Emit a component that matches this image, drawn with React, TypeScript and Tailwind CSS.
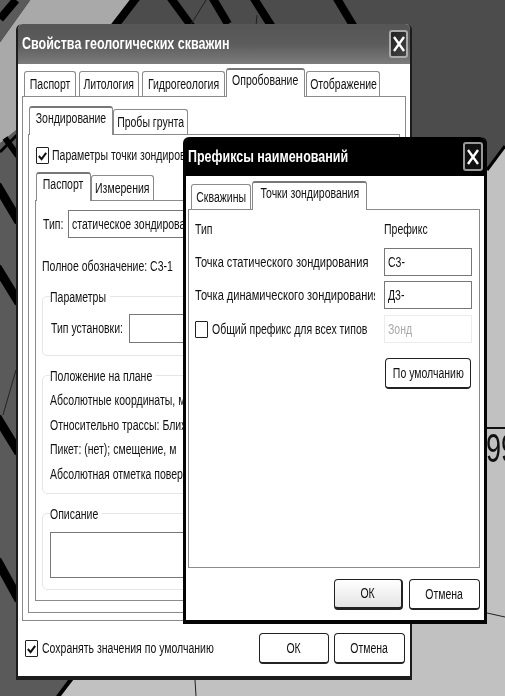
import type { ReactNode } from 'react';

// шрифт в окнах узкий, такого нет, поэтому сжимаем по горизонтали
function T({ children, center, wide }: { children: ReactNode; center?: boolean; wide?: boolean }) {
  return (
    <span
      className={
        'inline-block shrink-0 whitespace-nowrap ' +
        (wide ? 'scale-x-[0.79] ' : 'scale-x-[0.75] ') +
        (center ? 'origin-center' : 'origin-left')
      }
    >
      {children}
    </span>
  );
}

function Tab({ label, active, w }: { label: string; active?: boolean; w: number }) {
  return (
    <div
      style={{ width: w }}
      className={
        active
          ? 'relative z-10 -mb-px flex h-[29px] shrink-0 items-center justify-center rounded-t-[3px] border-x border-t-2 border-[#8a8a8a] border-t-[#777] bg-white pb-[6px] text-[#111]'
          : 'flex h-[25px] shrink-0 items-center justify-center rounded-t-[3px] border-x border-t border-[#8a8a8a] bg-white pt-[1px] text-[#111]'
      }
    >
      <T center>{label}</T>
    </div>
  );
}

function CheckBox({ checked }: { checked?: boolean }) {
  return (
    <div className="flex h-[17px] w-[13px] shrink-0 items-center justify-center rounded-[1px] border border-[#222] bg-white">
      {checked && (
        <svg viewBox="0 0 12 12" className="h-[12px] w-[11px]">
          <path d="M2 6 L5 9.5 L10 2.5" fill="none" stroke="#111" strokeWidth="2.2" />
        </svg>
      )}
    </div>
  );
}

function CloseButton({ dark }: { dark?: boolean }) {
  return (
    <div
      className={
        dark
          ? 'flex h-[29px] w-[20px] items-center justify-center rounded-[3px] border-2 border-[#999] bg-[#111]'
          : 'flex h-[28px] w-[19px] items-center justify-center rounded-[3px] border-2 border-[#aaa] bg-gradient-to-br from-[#222] to-[#444]'
      }
    >
      <svg viewBox="0 0 14 18" className="h-[18px] w-[14px]">
        <path d="M2 2 L12 16 M12 2 L2 16" stroke="#fff" strokeWidth="2.4" fill="none" />
      </svg>
    </div>
  );
}

function Btn({ label, w, main }: { label: string; w: number; main?: boolean }) {
  return (
    <div
      style={{ width: w }}
      className={
        'flex h-[31px] shrink-0 items-center justify-center rounded-[4px] border border-[#222] text-[#111] ' +
        (main ? 'border-r-2 border-b-[3px] bg-gradient-to-b from-white to-[#e4e4e4]' : 'border-b-2 bg-white')
      }
    >
      <T center>{label}</T>
    </div>
  );
}

function Group({ title, h, children }: { title: string; h: number; children: ReactNode }) {
  return (
    <div style={{ height: h }} className="relative -ml-px w-[400px] shrink-0 rounded-[5px] border border-[#e6e6e6]">
      <span className="absolute top-[-10px] left-[7px] origin-left scale-x-[0.75] whitespace-nowrap bg-white pr-[5px]">
        {title}
      </span>
      {children}
    </div>
  );
}

function Field({ text, className }: { text?: string; className: string }) {
  return (
    <div className={'flex shrink-0 items-center overflow-hidden border border-[#777] bg-white pl-[3px] ' + className}>
      {text && <T>{text}</T>}
    </div>
  );
}

function MainWindow() {
  return (
    <div className="absolute top-[24px] left-[16px] flex h-[656px] w-[396px] flex-col rounded-t-[6px] border-x-2 border-b-4 border-[#1c1c1c] bg-white text-[14px] text-[#111]">
      <div className="flex h-[40px] shrink-0 items-center justify-between rounded-t-[5px] bg-gradient-to-b from-[#555] via-[#5c5c5c] to-[#7c7c7c] pr-[2px] pl-[4px]">
        <span className="inline-block origin-left scale-x-[0.78] whitespace-nowrap text-[16px] font-bold text-white">
          Свойства геологических скважин
        </span>
        <CloseButton />
      </div>
      <div className="flex h-[32px] shrink-0 items-end gap-[1px] pl-[6px]">
        <Tab label="Паспорт" w={52} />
        <div className="w-px" />
        <Tab label="Литология" w={60} />
        <div className="w-px" />
        <Tab label="Гидрогеология" w={83} />
        <Tab label="Опробование" w={79} active />
        <Tab label="Отображение" w={74} />
      </div>
      <div className="mx-[4px] flex h-[525px] flex-col overflow-hidden border border-[#8a8a8a] pr-[5px] pb-[7px] pl-[5px]">
        <div className="flex h-[37px] shrink-0 items-end pl-[1px]">
          <Tab label="Зондирование" w={84} active />
          <Tab label="Пробы грунта" w={75} />
        </div>
        <div className="flex min-h-0 flex-1 flex-col border border-[#8a8a8a] pr-[6px] pb-[11px] pl-[6px]">
          <div className="mt-[12px] flex h-[17px] shrink-0 items-center gap-[3px] pl-[1px]">
            <CheckBox checked />
            <T>Параметры точки зондирования</T>
          </div>
          <div className="mt-[8px] flex h-[28px] shrink-0 items-end pl-[1px]">
            <Tab label="Паспорт" w={55} active />
            <Tab label="Измерения" w={63} />
          </div>
          <div className="flex min-h-0 flex-1 flex-col overflow-hidden border border-[#8a8a8a] px-[7px]">
            <div className="mt-[9px] flex h-[28px] shrink-0 items-center">
              <div className="w-[25px] shrink-0">
                <T>Тип:</T>
              </div>
              <Field text="статическое зондирование" className="h-[28px] flex-1" />
            </div>
            <div className="mt-[19px] -ml-px h-[18px] shrink-0 leading-[18px]">
              <T>Полное обозначение: С3-1</T>
            </div>
            <div className="mt-[21px]">
              <Group title="Параметры" h={60}>
                <div className="mt-[17px] flex items-center pl-[8px]">
                  <div className="w-[78px] shrink-0">
                    <T>Тип установки:</T>
                  </div>
                  <Field className="h-[29px] flex-1" />
                </div>
              </Group>
            </div>
            <div className="mt-[19px]">
              <Group title="Положение на плане" h={119}>
                <div className="pt-[12px] pl-[7px] leading-[24.7px]">
                  <div>
                    <T>Абсолютные координаты, м</T>
                  </div>
                  <div>
                    <T>Относительно трассы: Ближайшая</T>
                  </div>
                  <div>
                    <T>Пикет: (нет); смещение, м</T>
                  </div>
                  <div>
                    <T>Абсолютная отметка поверхности</T>
                  </div>
                </div>
              </Group>
            </div>
            <div className="mt-[19px]">
              <Group title="Описание" h={77}>
                <Field className="mt-[18px] ml-[7px] h-[46px] w-[380px]" />
              </Group>
            </div>
          </div>
        </div>
      </div>
      <div className="flex flex-1 items-center justify-between pr-[5px] pl-[7px]">
        <div className="flex w-[200px] shrink-0 items-center gap-[4px]">
          <CheckBox checked />
          <T>Сохранять значения по умолчанию</T>
        </div>
        <div className="flex gap-[5px]">
          <Btn label="ОК" w={70} />
          <Btn label="Отмена" w={71} />
        </div>
      </div>
    </div>
  );
}

function PrefixDialog() {
  return (
    <div className="absolute top-[137px] left-[183px] flex h-[487px] w-[304px] flex-col rounded-t-[6px] border-x-[3px] border-b-4 border-[#050505] bg-white text-[14px] text-[#111]">
      <div className="flex h-[39px] shrink-0 items-center justify-between rounded-t-[4px] bg-black pr-[1px] pl-[2px]">
        <span className="inline-block origin-left scale-x-[0.78] whitespace-nowrap text-[16px] font-bold text-white">
          Префиксы наименований
        </span>
        <CloseButton dark />
      </div>
      <div className="flex h-[33px] shrink-0 items-end gap-[1px] pl-[5px]">
        <Tab label="Скважины" w={60} />
        <Tab label="Точки зондирования" w={115} active />
      </div>
      <div className="mr-[4px] ml-[2px] h-[359px] shrink-0 border border-[#8a8a8a] pl-[6px]">
        <div className="mt-[10px] flex h-[18px] items-center">
          <div className="w-[189px]">
            <T>Тип</T>
          </div>
          <T>Префикс</T>
        </div>
        <div className="mt-[10px] flex items-center">
          <div className="w-[189px] shrink-0">
            <T wide>Точка статического зондирования</T>
          </div>
          <Field text="С3-" className="h-[28px] w-[88px]" />
        </div>
        <div className="mt-[5px] flex items-center">
          <div className="w-[180px] shrink-0 overflow-hidden">
            <T wide>Точка динамического зондирования</T>
          </div>
          <Field text="Д3-" className="ml-[9px] h-[28px] w-[88px]" />
        </div>
        <div className="mt-[6px] flex items-center">
          <div className="flex w-[189px] shrink-0 items-center gap-[4px]">
            <CheckBox />
            <T>Общий префикс для всех типов</T>
          </div>
          <div className="flex h-[28px] w-[88px] items-center border border-[#ececec] pl-[3px] text-[#aaa]">
            <T>Зонд</T>
          </div>
        </div>
        <div className="mt-[15px] ml-[190px]">
          <Btn label="По умолчанию" w={86} />
        </div>
      </div>
      <div className="mt-[11px] mr-[4px] flex justify-end gap-[6px]">
        <Btn label="ОК" w={69} main />
        <Btn label="Отмена" w={71} />
      </div>
    </div>
  );
}

export default function App() {
  return (
    <div className="relative h-[696px] w-[505px] overflow-hidden bg-[#c1c1c1] font-['Liberation_Sans',sans-serif] blur-[0.3px]">
      {/* карта под окнами */}
      <svg viewBox="0 0 505 696" className="absolute inset-0 h-full w-full">
        <polygon points="0,0 505,0 505,145 487,168 412,168 412,696 60,696 0,696" fill="#5a5a5a" />
        <polygon points="130,0 505,0 505,145 487,168 412,168 412,30 110,30" fill="#4c4c4c" />
        <polygon points="30,0 130,0 110,30 16,30 16,130 0,143 0,42" fill="#a9a9a9" />
        <polygon points="60,696 75,678 412,678 412,696" fill="#c1c1c1" />
        <g stroke="#000" strokeWidth="8" fill="none">
          <path d="M0 19 L16 0" />
          <path d="M114 27 L137 -3" />
          <path d="M170 -3 L192 27" />
          <path d="M212 -3 L228 24" />
          <path d="M253 -3 L272 27" />
          <path d="M336 -3 L354 27" />
          <path d="M-3 185 L19 222" strokeWidth="9" />
          <path d="M-3 267 L19 303" strokeWidth="9" />
          <path d="M-3 417 L19 453" strokeWidth="9" />
          <path d="M-3 560 L19 600" strokeWidth="9" />
          <path d="M0 152 L18 134" strokeWidth="3" />
          <path d="M5 138 L18 156" strokeWidth="6" />
          <path d="M57 698 L72 678" strokeWidth="4" />
          <path d="M487 170 L505 146" strokeWidth="3" />
        </g>
        <g stroke="#222" strokeWidth="1" fill="none">
          <path d="M190 26 L206 0" />
          <path d="M256 26 L257 15" />
          <path d="M16 370 L3 415" />
          <path d="M30 0 L0 42" stroke="#555" />
          <path d="M195 680 L196 696" />
          <path d="M487 613 L505 617" />
        </g>
        <path d="M487 428 L505 428" stroke="#111" strokeWidth="2" />
        <text x="486" y="462" fontSize="40" fontFamily="Liberation Sans" textLength="30" lengthAdjust="spacingAndGlyphs" fill="#111">
          99
        </text>
      </svg>
      <MainWindow />
      <PrefixDialog />
    </div>
  );
}
